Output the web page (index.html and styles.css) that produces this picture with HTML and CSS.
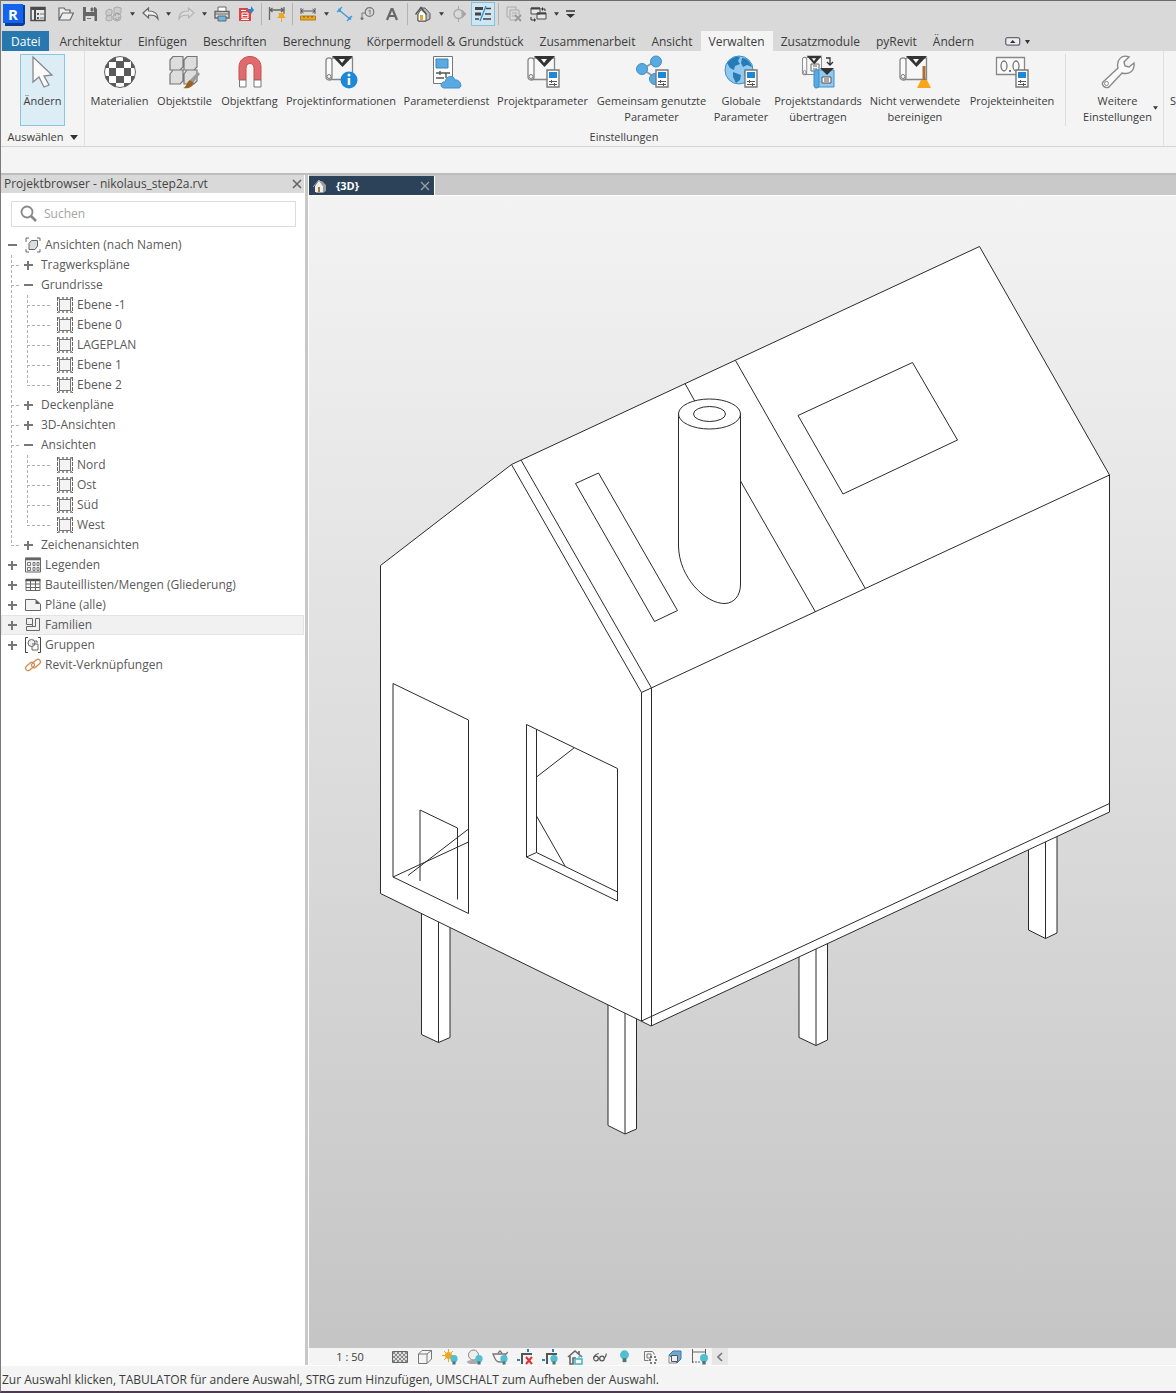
FILE: index.html
```html
<!DOCTYPE html>
<html lang="de">
<head>
<meta charset="utf-8">
<meta name="viewport" content="width=device-width, initial-scale=1">
<title>nikolaus_step2a.rvt</title>
<link rel="stylesheet" href="styles.css">
</head>
<body>
<svg class="defs" aria-hidden="true">
  <symbol id="i-down" viewBox="0 0 6 4"><path d="M0 0h6L3 4z" fill="#3a3a3a"/></symbol>
  <symbol id="i-plus" viewBox="0 0 9 9"><path d="M0 4h9M4 0v9" stroke="#777" stroke-width="2"/></symbol>
  <symbol id="i-minus" viewBox="0 0 9 9"><path d="M0 4h9" stroke="#777" stroke-width="2"/></symbol>
  <symbol id="i-view" viewBox="0 0 16 16"><rect x="2.500" y="2.500" width="11" height="11" fill="#f3f3f3" stroke="#777"/><path d="M.5 0v16M15.500 0v16" stroke="#666" stroke-dasharray="4 1"/><path d="M1 1h14M1 15h14" stroke="#999" stroke-width="2" stroke-dasharray="2 2"/></symbol>
  <symbol id="i-scroll" viewBox="0 0 34 34"><path d="M8 3h20.500v21.500H6" fill="#f7f7f7" stroke="#858585" stroke-width="1.300"/><path d="M2 5.500C2 2 8 2 8 5.500V22a3 3 0 0 1-6 0z" fill="#fafafa" stroke="#858585" stroke-width="1.300"/><circle cx="5" cy="21.500" r="2" fill="none" stroke="#777"/><path d="M8 1h21l-10.500 11z" fill="#333"/><path d="M15 4h6l-3 4z" fill="#f5f5f5"/></symbol>
  <symbol id="i-param" viewBox="0 0 14 19"><path d="M1 1h12v17H1z" fill="#fff" stroke="#777" stroke-width="1.400"/><path d="M3 3h8v6H3z" fill="#1e88d8"/><path d="M3 12.500h8M3 15.500h8M5.500 11v3M8.500 14v3" stroke="#555"/></symbol>
  <symbol id="i-bulb" viewBox="0 0 8 11"><circle cx="4" cy="4" r="4" fill="#52bfd0"/><path d="M2.300 7h3.400v3.500H2.300z" fill="#52757c"/></symbol>
</svg>

<header class="top">
  <div class="qat" role="toolbar" aria-label="Schnellzugriff">
    <button class="tool" aria-label="Revit"><svg width="24" height="24" viewBox="0 0 24 24"><path d="M3 3h20v19l-2 2H3z" fill="#0a3d94"/><path d="M1 2h20v19H1z" fill="#1463ee"/><text x="11" y="18" text-anchor="middle" class="logo">R</text></svg></button>
    <button class="tool start" aria-label="Startseite"><svg width="16" height="16"><rect x="1" y="1.500" width="14" height="13" fill="#e9e9e9" stroke="#4b4b4b" stroke-width="1.500"/><path d="M1 3h14M5 3v11" stroke="#4b4b4b" stroke-width="2"/><path d="M7 7h2v2H7zM7 11h2v2H7z" fill="#555"/><path d="M10 8h4M10 12h4" stroke="#777"/></svg></button>
    <button class="tool" aria-label="Öffnen"><svg width="16" height="16"><path d="M1 14V2h5l1.500 2H12v3M1 14 4.500 7H15.500L12 14z" fill="#eee" stroke="#666" stroke-width="1.200"/></svg></button>
    <button class="tool" aria-label="Speichern"><svg width="16" height="16"><path d="M1 1h12l2 2v12H1z" fill="#666"/><path d="M4 1h8v5H4zM3.500 10h9v5h-9z" fill="#ddd"/><path d="M9 2h2v3H9zM5 12.500h4" fill="#555" stroke="#777"/></svg></button>
    <button class="tool" aria-label="Synchronisieren"><svg width="18" height="16"><g fill="#ccc" stroke="#aaa"><path d="m1 5 3-2 3 1v4l-3 2-3-1zM1 11l3-2 3 1v4l-3 1-3-1zM9 2l3-1 4 1v5l-4 1-3-1z"/><circle cx="12" cy="11" r="4"/></g><path d="M10 12a2 2 0 0 0 4-1M14 9a2 2 0 0 0-4 1" fill="none" stroke="#999"/></svg></button>
    <button class="drop" aria-label="Mehr"><svg width="5" height="4"><use href="#i-down"/></svg></button>
    <button class="tool" aria-label="Rückgängig"><svg width="17" height="14"><path d="M1 6 6.500 1v3C11 4 16 5 16 12 13.500 8 11 8 6.500 8v3z" fill="#eee" stroke="#666" stroke-width="1.200"/></svg></button>
    <button class="drop" aria-label="Mehr"><svg width="5" height="4"><use href="#i-down"/></svg></button>
    <button class="tool" aria-label="Wiederholen"><svg width="17" height="14"><path d="M16 6 10.500 1v3C6 4 1 5 1 12 3.500 8 6 8 10.500 8v3z" fill="#ddd" stroke="#b5b5b5" stroke-width="1.200"/></svg></button>
    <button class="drop" aria-label="Mehr"><svg width="5" height="4"><use href="#i-down"/></svg></button>
    <button class="tool" aria-label="Drucken"><svg width="16" height="16"><path d="M4 1h8v5H4z" fill="#fff" stroke="#666"/><path d="M1 5.500h14V12H1z" fill="#ddd" stroke="#666" stroke-width="1.400"/><path d="M1 8h14" stroke="#666"/><path d="M4 10h8v5H4z" fill="#6fb6e8" stroke="#666"/></svg></button>
    <button class="tool" aria-label="PDF"><svg width="16" height="16"><path d="M1 2h9v3h3v10H1z" fill="#d84545"/><path d="M4 7h6v5H4zM3 4.500h5M4 9.500h6M3 13.500h8" fill="none" stroke="#fff"/><path d="M9 3h4V0l3 4-3 4V5H9z" fill="#1e88d8"/></svg></button>
    <i class="split"></i>
    <button class="tool" aria-label="Ausgerichtete Bemaßung"><svg width="18" height="16"><path d="M1.500 1v13M16 1v7M2 4h14M4.500 2 2 4l2.500 2M13 2l2.500 2L13 6" fill="none" stroke="#666" stroke-width="1.300"/><path d="M10 7h7l-1 1v2l2 2h-4v4h-1v-4h-4l2-2V8z" fill="#eba822"/></svg></button>
    <i class="split"></i>
    <button class="tool" aria-label="Messen"><svg width="16" height="14"><path d="M1 1v6M15 1v6M1 4h14M3.500 2 1 4l2.500 2M12.500 2 15 4l-2.500 2" fill="none" stroke="#555"/><path d="M.5 9h15v4H.5z" fill="#eba822" stroke="#b57d14"/><path d="M4 9v2M8 9v2M12 9v2" stroke="#8a5f10"/></svg></button>
    <button class="drop" aria-label="Mehr"><svg width="5" height="4"><use href="#i-down"/></svg></button>
    <button class="tool" aria-label="Bemaßung"><svg width="17" height="16"><path d="m3 4 11 9M5 4 3 3.500l.5 2.500M12 13h2.500l-.5-2.500" fill="none" stroke="#3e9bd8" stroke-width="1.400"/><path d="m1 6 5-5M11 15l5-5" stroke="#3e9bd8" stroke-width="1.300"/></svg></button>
    <button class="tool" aria-label="Nach Kategorie beschriften"><svg width="16" height="14"><circle cx="9.500" cy="5" r="4.300" fill="none" stroke="#777" stroke-width="1.200"/><path d="M5 6H2v5M8.500 4l1.500-1v4.500" fill="none" stroke="#777"/><circle cx="2" cy="11.500" r="1.500" fill="#777"/></svg></button>
    <button class="tool" aria-label="Text"><svg width="14" height="14"><path d="M2 13 6.500 2h1L12 13M4 9h6" fill="none" stroke="#666" stroke-width="2.200"/></svg></button>
    <i class="split"></i>
    <button class="tool" aria-label="3D-Ansicht"><svg width="16" height="16"><path d="M5 2h5l5 5.500V13l-4 2H3V8" fill="#bbb" stroke="#555"/><path d="M3 8 6 3.500 11 8v7H3z" fill="#fff" stroke="#555"/><path d="m.5 8.500 5.500-7 5.500 7" fill="none" stroke="#555" stroke-width="1.400"/><path d="M5 9h3v5H5z" fill="#eba822"/></svg></button>
    <button class="drop" aria-label="Mehr"><svg width="5" height="4"><use href="#i-down"/></svg></button>
    <button class="tool" aria-label="Schnitt"><svg width="14" height="16"><circle cx="6.500" cy="8" r="4.500" fill="none" stroke="#a8a8a8" stroke-width="1.400"/><path d="M6.500 0v3M6.500 13v3M10 4l4 4-4 4z" fill="#a8a8a8" stroke="#a8a8a8"/></svg></button>
    <button class="tool on" aria-label="Dünne Linien" aria-pressed="true"><svg width="18" height="18"><path d="M1 3.500h8M1 9h6" stroke="#444" stroke-width="3"/><path d="M1 14h4M12 3.500h5M11 9h6M9 14h8" stroke="#444" stroke-width="1.300"/><path d="M12 1 6 16" stroke="#2a8fd6" stroke-width="1.300"/></svg></button>
    <i class="split"></i>
    <button class="tool" aria-label="Verdeckte Fenster schließen"><svg width="16" height="16"><path d="M10 4V1H1v10h2M4 4h9v5M4 4v10h5M6 7h5M6 10h3" fill="none" stroke="#aaa"/><path d="m9 9 6 6M15 9l-6 6" stroke="#999" stroke-width="1.800"/></svg></button>
    <button class="tool" aria-label="Fenster wechseln"><svg width="17" height="16"><path d="M1 2h9v6H1zM7 7h9v6H7z" fill="#e8e8e8" stroke="#4b4b4b"/><path d="M1 2.500h9M7 7.500h9" stroke="#444" stroke-width="2"/><path d="M12 3h3v2M1 11v3h4" fill="none" stroke="#333"/><path d="m11 3 2-2v4zM6 14l-2-2v4z" fill="#333"/></svg></button>
    <button class="drop" aria-label="Mehr"><svg width="5" height="4"><use href="#i-down"/></svg></button>
    <button class="drop last" aria-label="Anpassen"><svg width="9" height="8"><path d="M0 1h9" stroke="#333" stroke-width="1.500"/><path d="M0 4h9L4.500 8z" fill="#333"/></svg></button>
  </div>
  <nav class="tabs">
    <button class="tab file">Datei</button>
    <button class="tab">Architektur</button>
    <button class="tab">Einfügen</button>
    <button class="tab">Beschriften</button>
    <button class="tab">Berechnung</button>
    <button class="tab">Körpermodell &amp; Grundstück</button>
    <button class="tab">Zusammenarbeit</button>
    <button class="tab">Ansicht</button>
    <button class="tab current">Verwalten</button>
    <button class="tab">Zusatzmodule</button>
    <button class="tab">pyRevit</button>
    <button class="tab">Ändern</button>
    <button class="fold" aria-label="Multifunktionsleiste minimieren"><svg width="25" height="9"><rect x=".7" y=".7" width="14" height="7.500" rx="2" fill="#eee" stroke="#667" stroke-width="1.300"/><path d="M5 6h5.500L7.700 3z" fill="#333"/><path d="M20 3h5l-2.500 4z" fill="#333"/></svg></button>
  </nav>
</header>

<div class="ribbon">
  <section class="panel select">
    <div class="tools">
      <button class="cmd active"><svg width="34" height="34"><path d="M7 2v25l6-5 5 10 5-2-5-9 8-1z" fill="#fafafa" stroke="#888" stroke-width="1.300"/></svg><span>Ändern</span></button>
    </div>
    <button class="title">Auswählen <svg width="8" height="5" viewBox="0 0 6 4" preserveAspectRatio="none"><path d="M0 0h6L3 4z" fill="#333"/></svg></button>
  </section>
  <section class="panel settings">
    <div class="tools grid">
      <button class="cmd"><svg width="34" height="34" viewBox="0 0 34 34"><defs><clipPath id="ball"><circle cx="17" cy="17" r="15.500"/></clipPath></defs><circle cx="17" cy="17" r="15.500" fill="#fff"/><g clip-path="url(#ball)" fill="#5a5a5a"><path d="M6 0h7v7H6zM20 0h7v7h-7zM13 6h8v7h-8zM0 6h6v7H0zM28 6h6v7h-6zM6 13h7v8H6zM21 13h7v8h-7zM13 21h8v7h-8zM0 21h6v7H0zM28 21h6v7h-6zM6 28h7v6H6zM21 28h7v6h-7z"/></g><circle cx="17" cy="17" r="15.500" fill="none" stroke="#666"/></svg><span>Materialien</span></button>
      <button class="cmd"><svg width="34" height="34"><g fill="#ddd" stroke="#777" stroke-width="1.200"><path d="M2 5 5 1.500h10V12l-3 3H2zM16 5l3-3.500h10V12l-3 3H16zM2 19l3-4h10v11l-3 3H2zM16 19l3-4h10v11l-3 3H16z"/></g><path d="m22 25 8-8 2 2-7 9z" fill="#999"/><path d="M15 33c4-1 3-6 7-8l4 3c-1 4-6 6-11 5z" fill="#986324"/></svg><span>Objektstile</span></button>
      <button class="cmd"><svg width="34" height="34"><path d="M6 25V12C6-2 28-2 28 12v13h-7V13c0-6-8-6-8 0v12z" fill="#df6b6e" stroke="#c65052"/><path d="M6.500 25H13v7H6.500zM21 25h7v7h-7z" fill="#fff" stroke="#777"/></svg><span>Objektfang</span></button>
      <button class="cmd"><svg width="34" height="34"><use href="#i-scroll"/><circle cx="25" cy="25" r="8.500" fill="#1e88d8"/><path d="M25 23v7" stroke="#fff" stroke-width="2.500"/><circle cx="25" cy="20" r="1.500" fill="#fff"/></svg><span>Projektinformationen</span></button>
      <button class="cmd"><svg width="34" height="34"><path d="M3.500 1.500h19v27h-19z" fill="#fff" stroke="#777"/><path d="M6 4h12v9H6z" fill="#5aa9e0" stroke="#3985bd"/><path d="M6 18h14M6 23h8M10 16v4M16 18v5" stroke="#555" stroke-width="1.400"/><path d="M14 33c-5-1-3-7 1-6 1-6 8-8 10-2 5-1 8 7 4 8z" fill="#5aa9e0" stroke="#3c8fcb"/></svg><span>Parameterdienst</span></button>
      <button class="cmd"><svg width="34" height="34"><use href="#i-scroll"/><svg x="20" y="14" width="14" height="19"><use href="#i-param"/></svg></svg><span>Projektparameter</span></button>
      <button class="cmd"><svg width="34" height="34"><path d="m7 14 14-8M7 14l14 9" stroke="#999" stroke-width="2"/><g fill="#5aa9e0" stroke="#3c8fcb"><circle cx="21" cy="6.500" r="5.500"/><circle cx="7" cy="14" r="5.500"/><circle cx="20" cy="24" r="5.500"/></g><svg x="20" y="14" width="14" height="19"><use href="#i-param"/></svg></svg><span>Gemeinsam genutzte<br>Parameter</span></button>
      <button class="cmd"><svg width="34" height="34"><circle cx="15" cy="15" r="14" fill="#8fc9f0" stroke="#3c8fcb"/><path d="M4 7c4-5 9-6 12-5l-2 4 2 3-5 2-1 4-4-2-3-5zM18 3c5 0 9 5 10 9l-5-2-4 2-2-4zM9 17l8 3-1 5-4 3-3-6zM20 16l7-1-2 8-4-1z" fill="#267bb5"/><svg x="20" y="14" width="14" height="19"><use href="#i-param"/></svg></svg><span>Globale<br>Parameter</span></button>
      <button class="cmd"><svg width="34" height="34"><svg width="23" height="27" viewBox="0 0 32 34" preserveAspectRatio="none"><use href="#i-scroll" width="34" height="34"/></svg><path d="M10 9h8v7h-8zM12 11h4M12 14h4" fill="none" stroke="#666"/><path d="M25 3h4v6M26 7l3 3 3-3" fill="none" stroke="#333" stroke-width="1.300"/><path d="M15 15h18v17H14z" fill="#8fc9f0" stroke="#3c8fcb"/><path d="M13 17c0-3 5-3 5 0v13a2.500 2.500 0 0 1-5 1z" fill="#5aa9e0" stroke="#3c8fcb"/><path d="M19 13h14l-7 7z" fill="#333"/><path d="M21 22h9v6h-9zM23 24h5M23 26h5" fill="#fff" stroke="#555"/></svg><span>Projektstandards<br>übertragen</span></button>
      <button class="cmd"><svg width="34" height="34"><use href="#i-scroll"/><path d="M26 11v15" stroke="#a8703a" stroke-width="3"/><path d="M23 25h6l4 8H19z" fill="#f9a51a"/></svg><span>Nicht verwendete<br>bereinigen</span></button>
      <button class="cmd"><svg width="34" height="34"><path d="M1.500 2.500h28v17h-28z" fill="#fafafa" stroke="#888" stroke-width="1.300"/><g fill="none" stroke="#777" stroke-width="1.300"><ellipse cx="9" cy="11" rx="3" ry="5"/><ellipse cx="21" cy="11" rx="3" ry="5"/></g><path d="M14 15h2v2h-2z" fill="#777"/><svg x="20" y="14" width="14" height="19"><use href="#i-param"/></svg></svg><span>Projekteinheiten</span></button>
      <button class="cmd more"><svg width="34" height="34"><path d="M2 27 17 13c-2-8 4-14 11-11l-5 5 1 4 4 1 5-4c1 8-5 12-12 10L8 32c-4 2-8-2-6-5z" fill="#fafafa" stroke="#888" stroke-width="1.400"/><circle cx="5.500" cy="28.500" r="2" fill="none" stroke="#888"/></svg><span>Weitere<br>Einstellungen</span></button>
      <svg class="moredrop" width="5" height="4"><use href="#i-down"/></svg>
    </div>
    <div class="title">Einstellungen</div>
  </section>
  <section class="panel next"><button class="cmd cut"><span>S</span></button></section>
</div>
<div class="options"></div>

<main class="work">
  <aside class="browser">
    <header class="bhead"><h1>Projektbrowser - nikolaus_step2a.rvt</h1><button aria-label="Schließen"><svg width="10" height="10"><path d="m1 1 8 8M9 1 1 9" stroke="#666" stroke-width="1.600"/></svg></button></header>
    <label class="search"><svg width="18" height="18"><circle cx="7" cy="7" r="5.500" fill="none" stroke="#888" stroke-width="1.800"/><path d="m11 11 5 5" stroke="#888" stroke-width="2.600"/></svg><input type="text" placeholder="Suchen" aria-label="Suchen"></label>
    <ul class="tree">
      <li><div class="row"><button class="exp" aria-label="Zuklappen"><svg width="9" height="9"><use href="#i-minus"/></svg></button><svg width="16" height="16"><path d="M1 5V1h3M12 1h3v3M15 12v3h-3M4 15H1v-3" fill="none" stroke="#666"/><path d="M4 6.500 6.500 3.500h6V9L10 12.500H4z" fill="#ddd" stroke="#666"/></svg><span>Ansichten (nach Namen)</span></div>
        <ul class="sub">
          <li><div class="row"><button class="exp" aria-label="Aufklappen"><svg width="9" height="9"><use href="#i-plus"/></svg></button><span>Tragwerkspläne</span></div></li>
          <li><div class="row"><button class="exp" aria-label="Zuklappen"><svg width="9" height="9"><use href="#i-minus"/></svg></button><span>Grundrisse</span></div>
            <ul class="leaf">
              <li class="row"><svg width="16" height="16"><use href="#i-view"/></svg><span>Ebene -1</span></li>
              <li class="row"><svg width="16" height="16"><use href="#i-view"/></svg><span>Ebene 0</span></li>
              <li class="row"><svg width="16" height="16"><use href="#i-view"/></svg><span>LAGEPLAN</span></li>
              <li class="row"><svg width="16" height="16"><use href="#i-view"/></svg><span>Ebene 1</span></li>
              <li class="row"><svg width="16" height="16"><use href="#i-view"/></svg><span>Ebene 2</span></li>
            </ul></li>
          <li><div class="row"><button class="exp" aria-label="Aufklappen"><svg width="9" height="9"><use href="#i-plus"/></svg></button><span>Deckenpläne</span></div></li>
          <li><div class="row"><button class="exp" aria-label="Aufklappen"><svg width="9" height="9"><use href="#i-plus"/></svg></button><span>3D-Ansichten</span></div></li>
          <li><div class="row"><button class="exp" aria-label="Zuklappen"><svg width="9" height="9"><use href="#i-minus"/></svg></button><span>Ansichten</span></div>
            <ul class="leaf">
              <li class="row"><svg width="16" height="16"><use href="#i-view"/></svg><span>Nord</span></li>
              <li class="row"><svg width="16" height="16"><use href="#i-view"/></svg><span>Ost</span></li>
              <li class="row"><svg width="16" height="16"><use href="#i-view"/></svg><span>Süd</span></li>
              <li class="row"><svg width="16" height="16"><use href="#i-view"/></svg><span>West</span></li>
            </ul></li>
          <li><div class="row"><button class="exp" aria-label="Aufklappen"><svg width="9" height="9"><use href="#i-plus"/></svg></button><span>Zeichenansichten</span></div></li>
        </ul></li>
      <li class="row"><button class="exp" aria-label="Aufklappen"><svg width="9" height="9"><use href="#i-plus"/></svg></button><svg width="16" height="16"><path d="M.5 1h15v14H.5z" fill="#f3f3f3" stroke="#666"/><path d="M0 2h16" stroke="#666" stroke-width="2.500"/><path d="M2.500 5.500h3v3h-3zM2.500 10.500h3v3h-3zM8 5.500h2v3H8zM12 5.500h2v3h-2zM8 10.500h2v3H8zM12 10.500h2v3h-2z" fill="none" stroke="#777"/></svg><span>Legenden</span></li>
      <li class="row"><button class="exp" aria-label="Aufklappen"><svg width="9" height="9"><use href="#i-plus"/></svg></button><svg width="16" height="16"><path d="M1 3h14v10.500H1zM1 7h14M1 10.500h14M5.500 3v10M10.500 3v10" fill="none" stroke="#666"/><path d="M.5 3h15" stroke="#555" stroke-width="2.500"/></svg><span>Bauteillisten/Mengen (Gliederung)</span></li>
      <li class="row"><button class="exp" aria-label="Aufklappen"><svg width="9" height="9"><use href="#i-plus"/></svg></button><svg width="16" height="16"><path d="M.5 2.500h10l5 4.500v6.500H.5z" fill="#f3f3f3" stroke="#666"/><path d="M10.500 2.500V7h5z" fill="#666"/></svg><span>Pläne (alle)</span></li>
      <li class="row hot"><button class="exp" aria-label="Aufklappen"><svg width="9" height="9"><use href="#i-plus"/></svg></button><svg width="16" height="16"><path d="M1.500 1.500h6v6h-6zM10.500 1.500h4v12h-13v-4h9v-8M7.500 7.500v2" fill="none" stroke="#666"/></svg><span>Familien</span></li>
      <li class="row"><button class="exp" aria-label="Aufklappen"><svg width="9" height="9"><use href="#i-plus"/></svg></button><svg width="16" height="16"><path d="M3 .5H.5v15H3M13 .5h2.500v15H13" fill="none" stroke="#444"/><circle cx="6.500" cy="6" r="3.500" fill="#eee" stroke="#666"/><path d="M7 7h6v6H7V9M10 4h2v2" fill="none" stroke="#666"/></svg><span>Gruppen</span></li>
      <li class="row"><i class="exp"></i><svg width="16" height="16"><g fill="none" stroke="#d58a52" stroke-width="1.300"><rect x="0" y="7" width="10" height="5" rx="2.500" transform="rotate(-42 5 9.500)"/><rect x="6" y="4" width="10" height="5" rx="2.500" transform="rotate(-42 11 6.500)"/></g></svg><span>Revit-Verknüpfungen</span></li>
    </ul>
  </aside>

  <section class="view">
    <div class="viewtabs"><div class="viewtab"><svg width="14" height="14"><path d="M5 2h4l4 4v6l-3 2H3V7" fill="#999"/><path d="m2 7 4-5 4 5v6H2z" fill="#eee"/><path d="m0 8 6-7 5 7" fill="none" stroke="#aaa"/><path d="M5 8h2v5H5z" fill="#a07a3a"/></svg><b>{3D}</b><button aria-label="Ansicht schließen"><svg width="10" height="10"><path d="m1 1 8 8M9 1 1 9" stroke="#9a9fa4" stroke-width="1.300"/></svg></button></div></div>
    <div class="canvas">
      <svg class="model" viewBox="309 196 867 1152" preserveAspectRatio="xMinYMin meet" role="img" aria-label="3D-Modell">
        <g fill="#fff" stroke="#2b2b2b" stroke-linejoin="round">
          <path d="M421.500 900v134.500l17 8 11.500-5V900zM438.500 900v142.500"/>
          <path d="M608 1000v125.500l17 8.500 11.500-5V1000zM625 1000v134"/>
          <path d="M799 940v97.500l17 8 11.500-5.500V930zM816 930v115.500"/>
          <path d="M1028.500 830v100l17 8.500 11.500-5.500V820zM1045.500 830v108.500"/>
          <path d="M380.500 565.500 511.500 464.500 979.500 246.500 1109.500 475V812L651 1026 641 1021 380.500 893.500z"/>
          <path fill="none" d="M511.500 464.500 641.500 692.500V1021L1109.500 803.500M521 460 651.500 688V1026M641.500 692.500 1109.500 475"/>
          <path fill="none" d="M735.500 360.500 865 588M685 383.500l10 18M740.500 481l75 131"/>
          <path d="M798 415.500 912.500 362.500 957.500 440 843 494zM575.500 483.500l23-10.500 79 137.500-23 11z"/>
          <path d="M678.500 414v132C679 578 706 604 725 603.500 734 603 740.500 596 740.500 584V414"/>
          <ellipse cx="709.500" cy="414" rx="31" ry="15"/><ellipse cx="709.500" cy="414" rx="16" ry="7.500"/>
          <path d="M393 683.500 468.500 720V913.500L393 877z"/>
          <path fill="none" d="M420 881V810l37.500 18v71.500M393 877l75.500-35M408 875.500 468.500 829"/>
          <path d="M526.500 724.500 617.500 768.500V901L526.500 857z"/>
          <path fill="none" d="M536.500 729v123.500l81 39.500M526.500 857l10-4.500M536.500 777 574 748M536.500 816 565 866"/>
        </g>
      </svg>
    </div>
    <div class="viewbar">
      <button class="scale">1 : 50</button>
      <button class="vb" aria-label="Detaillierungsgrad"><svg width="16" height="16"><path d="M.5 2.500h15v11H.5z" fill="#ddd" stroke="#666"/><path d="m1 5 2-2M1 9l6-6M1 13 11 3M5 13 15 3M9 13l6-6M13 13l2-2M13 3l2 2M9 3l6 6M5 3l10 10M1 3l10 10M1 7l6 6M1 11l2 2" stroke="#777" stroke-width=".8"/></svg></button>
      <button class="vb" aria-label="Bildstil"><svg width="16" height="16"><path d="M1.500 5 5 1.500h9.500V10L10 14.500H1.500zM1.500 5H10v9.500M10 5l4.500-3.500" fill="#f4f4f4" stroke="#777"/></svg></button>
      <button class="vb" aria-label="Sonnenverlauf"><svg width="16" height="16"><path d="M6.500 0v13M0 6.500h13M2 2l9 9M11 2l-9 9" stroke="#eba822"/><circle cx="6.500" cy="6.500" r="3.500" fill="#eba822"/><svg x="8" y="6" width="8" height="10"><use href="#i-bulb"/></svg></svg></button>
      <button class="vb" aria-label="Schatten"><svg width="16" height="16"><ellipse cx="6" cy="13" rx="6" ry="2" fill="#aaa"/><circle cx="6.500" cy="6" r="5" fill="#eee" stroke="#888"/><svg x="8" y="6" width="8" height="10"><use href="#i-bulb"/></svg></svg></button>
      <button class="vb" aria-label="Rendering"><svg width="16" height="16"><path d="M3 5h10c2 4 0 8-5 8-4 0-5-3-7-8h2M6 4l2-2 2 2M13 6l3-3" fill="#f4f4f4" stroke="#777" stroke-width="1.300"/><svg x="8" y="6" width="8" height="10"><use href="#i-bulb"/></svg></svg></button>
      <button class="vb" aria-label="Zuschneiden"><svg width="16" height="16"><path d="M5 15V5h10" fill="none" stroke="#555" stroke-width="2"/><path d="M0 11h3M11 0v3" stroke="#2a7fd0" stroke-width="2"/><path d="m9 8 6 7M15 8l-6 7" stroke="#d33" stroke-width="2"/></svg></button>
      <button class="vb" aria-label="Zuschneidebereich"><svg width="16" height="16"><path d="M5 15V5h10" fill="none" stroke="#555" stroke-width="2"/><path d="M0 11h3M11 0v3" stroke="#2a7fd0" stroke-width="2"/><svg x="8" y="6" width="8" height="10"><use href="#i-bulb"/></svg></svg></button>
      <button class="vb" aria-label="3D-Ansicht sperren"><svg width="16" height="16"><path d="m1 8 7-6 7 6M3 7v8h3V9h3M12 5V2" fill="none" stroke="#666" stroke-width="1.600"/><path d="M8 10h7v5H8z" fill="#fff" stroke="#3fb4c8" stroke-width="1.500"/><path d="M12 10V7h3" fill="none" stroke="#3fb4c8"/></svg></button>
      <button class="vb" aria-label="Temporär ausblenden"><svg width="16" height="16"><g fill="none" stroke="#555" stroke-width="1.200"><circle cx="4" cy="9.500" r="2.300"/><circle cx="10" cy="9.500" r="2.300"/><path d="M1.700 9c.5-2.500 2.500-4 5-4.500M6.500 9.500h1M12.300 9.500c1-1 2-3 2-5"/></g></svg></button>
      <button class="vb" aria-label="Verdeckte anzeigen"><svg width="9" height="13"><use href="#i-bulb"/></svg></button>
      <button class="vb" aria-label="Ansichtseigenschaften"><svg width="16" height="16"><path d="M2.500 11.500v-9h8l2 3M2.500 11.500h4M5 5h4v4H5z" fill="none" stroke="#777"/><path d="M8 8h6v6H8z" fill="none" stroke="#555" stroke-dasharray="2 2" stroke-width="1.500"/></svg></button>
      <button class="vb" aria-label="Verschieben"><svg width="16" height="16"><path d="M2 6 6 2h8v8l-4 4z" fill="#6ea9d6" stroke="#3d78a8"/><path d="M4.500 6.500h6v6h-6z" fill="#eee" stroke="#555"/><path d="M2 6v8h8" fill="none" stroke="#888"/></svg></button>
      <button class="vb" aria-label="Abhängigkeiten"><svg width="18" height="16"><path d="M1.500 0v14M14.500 0v7M2 3h12" fill="none" stroke="#666"/><path d="M1 13h8" stroke="#666" stroke-dasharray="2 1"/><svg x="9" y="5" width="8" height="11"><use href="#i-bulb"/></svg></svg></button>
      <button class="vb back" aria-label="Zurück"><svg width="6" height="10"><path d="M5 1 1 5l4 4" fill="none" stroke="#777" stroke-width="1.600"/></svg></button>
    </div>
  </section>
</main>
<footer class="status">Zur Auswahl klicken, TABULATOR für andere Auswahl, STRG zum Hinzufügen, UMSCHALT zum Aufheben der Auswahl.</footer>
</body>
</html>
```
FILE: styles.css
```css
* { box-sizing: border-box; }
body {
  margin: 0;
  min-height: 100vh;
  display: flex;
  flex-direction: column;
  overflow-x: hidden;
  border-top: 1px solid #6b6b6b;
  border-left: 1px solid #7a7a7a;
  border-bottom: 2px solid #4d3a50;
  background: #f4f4f4;
  color: #3c3c3c;
  font: 12px/16px "Open Sans", "Noto Sans", sans-serif;
}
button {
  margin: 0;
  padding: 0;
  border: 0;
  background: none;
  color: inherit;
  font: inherit;
}
svg { display: block; flex: none; }
ul { margin: 0; padding: 0; list-style: none; }
.defs { width: 0; height: 0; position: absolute; }

.top { background: #d9d9d9; }
.qat { display: flex; align-items: center; height: 30px; padding: 0 0 4px 1px; }
.tool, .drop, .vb, .exp {
  display: flex;
  flex: none;
  align-items: center;
  justify-content: center;
}
.tool { width: 24px; height: 24px; }
.tool.start { margin-right: 4px; }
.tool.on { background: #cfe6f2; border: 1px solid #88bfdc; }
.drop { width: 12px; height: 24px; }
.drop.last { width: 16px; }
.split { width: 1px; height: 22px; margin: 0 3px; background: #b3b3b3; }
.logo { fill: #fff; font: bold 15px "Open Sans", sans-serif; }

.tabs { display: flex; height: 20px; padding-left: 1px; }
.tab { flex: none; padding: 1px 8px 0; line-height: 19px; white-space: nowrap; }
.tab.file { margin-right: 2px; padding: 1px 9px 0; background: #2878b0; color: #fff; }
.tab.current { background: #f4f4f4; }
.fold { margin-left: 23px; }

.ribbon {
  display: flex;
  height: 96px;
  border-bottom: 1px solid #d4d4d4;
  overflow: hidden;
}
.panel { flex: none; border-right: 1px solid #e0e0e0; }
.tools { height: 78px; padding-top: 3px; }
.select { width: 84px; }
.settings { width: 1079px; }
.next { border: 0; padding: 3px 0 0 6px; }
.grid {
  display: grid;
  grid-template-columns: 65px 65px 65px 118px 93px 99px 119px 60px 94px 100px 94px 94px 8px;
  padding-left: 2px;
}
.cmd {
  display: flex;
  flex-direction: column;
  align-items: center;
  height: 72px;
  padding-top: 1px;
  gap: 4px;
  text-align: center;
  white-space: nowrap;
  font-size: 11px;
}
.cmd.active {
  width: 45px;
  margin-left: 19px;
  padding-top: 0;
  background: #dcedf6;
  border: 1px solid #8cc5e0;
}
.cmd.more { margin-left: 6px; padding-left: 16px; border-left: 1px solid #dcdcdc; }
.moredrop { margin-top: 52px; }
.cut { padding-top: 39px; }
.title { display: flex; align-items: center; justify-content: center; gap: 6px; height: 16px; margin: 0 auto; font-size: 11px; }
.options { height: 28px; border-bottom: 2px solid #bdbdbd; }

.work { display: flex; flex: 1; background: #fff; }
.browser { flex: none; width: 307px; padding-right: 1px; border-right: 3px solid #c8c8c8; color: #5a5a5a; }
.bhead { display: flex; align-items: center; justify-content: space-between; height: 18px; padding: 0 2px 0 3px; background: #d9d9d9; }
.bhead h1 { margin: 0; font: inherit; color: #444; }
.search {
  display: flex;
  align-items: center;
  gap: 6px;
  height: 26px;
  margin: 8px 8px 8px 10px;
  padding-left: 8px;
  border: 1px solid #dcdcdc;
}
.search input { flex: 1; min-width: 0; padding: 0; border: 0; outline: 0; font: inherit; }
.search input::placeholder { color: #a5a5a5; opacity: 1; }
.row { display: flex; align-items: center; height: 20px; padding-left: 3px; }
.exp { width: 16px; height: 16px; }
.row > svg { margin: 0 4px 0 5px; }
.row > span { white-space: nowrap; }
.hot { background: #f1f1f1; border: 1px solid #e4e4e4; padding-left: 2px; }
.sub, .leaf {
  background: repeating-linear-gradient(to bottom, #b0b0b0 0 3px, transparent 3px 5px) left top / 1px calc(100% - 10px) no-repeat;
}
.sub { margin-left: 10px; }
.sub .row { padding-left: 0; }
.sub .row::before {
  content: "";
  width: 9px;
  height: 1px;
  background: repeating-linear-gradient(to right, #b0b0b0 0 3px, transparent 3px 5px);
}
.sub .row > span { margin-left: 5px; }
.leaf { margin-left: 16px; }
.sub .leaf .row::before { width: 25px; }
.sub .leaf .row > svg { margin: 0 0 0 5px; }
.sub .leaf .row > span { margin-left: 4px; }

.view { display: flex; flex: 1; min-width: 0; flex-direction: column; padding-left: 1px; }
.viewtabs { height: 21px; padding-top: 1px; border-bottom: 1px solid #fff; background: #c9c9c9; }
.viewtab {
  display: flex;
  align-items: center;
  gap: 9px;
  width: 126px;
  height: 19px;
  padding: 0 4px;
  border-right: 1px solid #fff;
  background: #2c4259;
  color: #fff;
}
.viewtab b { flex: 1; font-size: 11px; }
.canvas { flex: 1; background: linear-gradient(#f3f3f3, #c5c5c5); }
.model { width: 100%; height: auto; }
.viewbar { display: flex; align-items: center; height: 17px; background: #f4f4f4; }
.scale { width: 78px; padding-left: 4px; font-size: 11px; }
.vb { width: 25px; height: 17px; }
.vb.back { width: 16px; background: #e6e6e6; }
.status { height: 26px; padding: 6px 1px 0; border-top: 1px solid #fff; white-space: nowrap; }
```
